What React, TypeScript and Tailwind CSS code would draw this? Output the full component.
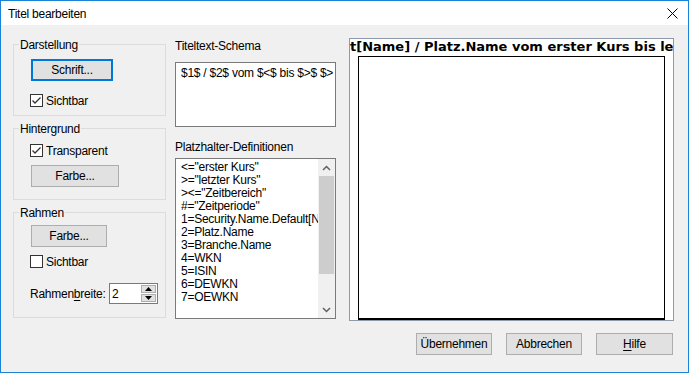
import React from "react";

const FONT = { fontFamily: '"Segoe UI", "Liberation Sans", Arial, sans-serif' };

export default function App() {
  return (
    <div
      style={FONT}
      className="flex h-[373px] w-[689px] flex-col overflow-hidden border border-[#1883d7] bg-[#f0f0f0] text-[12px] leading-[16px] tracking-[-0.25px] text-black"
    >
      {/* Title bar */}
      <div className="flex h-[24px] shrink-0 items-center justify-between bg-white pl-[7px] pr-[10px]">
        <span className="mt-[1px]">Titel bearbeiten</span>
        <svg width="11" height="11" viewBox="0 0 11 11" className="mt-[1px]">
          <path d="M0.5 0.5 L10.5 10.5 M10.5 0.5 L0.5 10.5" stroke="#000" strokeWidth="1" />
        </svg>
      </div>

      <div className="flex h-[296px] shrink-0 pl-[12px]">
        {/* Left column */}
        <div className="flex w-[153px] flex-col">
          <GroupBox label="Darstellung" className="mt-[19px] h-[72px]">
            <Button focused className="ml-[17px] mt-[6px] w-[82px]">
              Schrift...
            </Button>
            <CheckBox checked label="Sichtbar" className="mt-[13px]" />
          </GroupBox>

          <GroupBox label="Hintergrund" className="mt-[12px] h-[72px]">
            <CheckBox checked label="Transparent" className="mt-[7px]" />
            <Button className="ml-[17px] mt-[8px] w-[88px]">Farbe...</Button>
          </GroupBox>

          <GroupBox label="Rahmen" className="mt-[12px] h-[106px]">
            <Button className="ml-[17px] mt-[4px] w-[76px]">Farbe...</Button>
            <CheckBox label="Sichtbar" className="mt-[8px]" />
            <div className="ml-[16px] mt-[15px] flex items-center">
              <span className="w-[79px] whitespace-nowrap">
                Rahmen<span className="underline underline-offset-2">b</span>reite:
              </span>
              <SpinBox value="2" />
            </div>
          </GroupBox>
        </div>

        {/* Middle column */}
        <div className="ml-[9px] flex w-[161px] flex-col">
          <span className="mt-[13px]">Titeltext-Schema</span>
          <div className="mt-[8px] h-[65px] whitespace-nowrap border border-[#7a7a7a] bg-white pl-[5px] pt-[2px]">
            $1$ / $2$ vom $&lt;$ bis $&gt;$ $&gt;
          </div>

          <span className="mt-[12px]">Platzhalter-Definitionen</span>
          <div className="mt-[3px] flex h-[161px] border border-[#7a7a7a] bg-white">
            <div className="min-w-0 flex-1 overflow-hidden whitespace-nowrap pl-[5px] pt-[2px] leading-[13px]">
              {PLACEHOLDERS.map((line) => (
                <div key={line}>{line}</div>
              ))}
            </div>
            <ScrollBar />
          </div>
        </div>

        {/* Preview */}
        <div className="ml-[13px] flex w-[325px] flex-col">
          <div className="mt-[13px] flex h-[283px] flex-col overflow-hidden border border-[#8e9aab] bg-white">
            <div
              className="whitespace-nowrap text-[13px] font-bold leading-[16px] tracking-normal"
              style={{ fontFamily: '"DejaVu Sans", Verdana, sans-serif' }}
            >
              t[Name] / Platz.Name vom erster Kurs bis le
            </div>
            <div className="ml-[8px] mt-[1px] h-[264px] w-[307px] border border-b-2 border-black bg-white" />
          </div>
        </div>
      </div>

      {/* Dialog buttons */}
      <div className="mt-[12px] flex justify-end gap-[14px] pr-[15px]">
        <Button className="w-[76px]">Übernehmen</Button>
        <Button className="w-[76px]">Abbrechen</Button>
        <Button className="w-[77px]">
          <span className="underline underline-offset-2">H</span>ilfe
        </Button>
      </div>
    </div>
  );
}

const PLACEHOLDERS = [
  '<="erster Kurs"',
  '>="letzter Kurs"',
  '><="Zeitbereich"',
  '#="Zeitperiode"',
  "1=Security.Name.Default[Name]",
  "2=Platz.Name",
  "3=Branche.Name",
  "4=WKN",
  "5=ISIN",
  "6=DEWKN",
  "7=OEWKN",
];

function GroupBox({
  label,
  className,
  children,
}: {
  label: string;
  className?: string;
  children: React.ReactNode;
}) {
  return (
    <div className={`flex flex-col border border-[#dcdcdc] ${className ?? ""}`}>
      <span className="-mt-[8px] ml-[5px] w-fit bg-[#f0f0f0] px-[1px]">{label}</span>
      {children}
    </div>
  );
}

function Button({
  focused,
  className,
  children,
}: {
  focused?: boolean;
  className?: string;
  children: React.ReactNode;
}) {
  return (
    <div
      className={`flex h-[22px] items-center justify-center bg-[#e1e1e1] ${
        focused ? "border-2 border-[#0078d7]" : "border border-[#adadad]"
      } ${className ?? ""}`}
    >
      <span>{children}</span>
    </div>
  );
}

function CheckBox({
  checked,
  label,
  className,
}: {
  checked?: boolean;
  label: string;
  className?: string;
}) {
  return (
    <div className={`ml-[16px] flex h-[13px] items-center ${className ?? ""}`}>
      <div className="flex h-[13px] w-[13px] items-center justify-center border border-[#333333] bg-white">
        {checked && (
          <svg width="11" height="11" viewBox="0 0 11 11">
            <path d="M1.5 5.5 L4 8 L9.5 2.5" fill="none" stroke="#333" strokeWidth="1.3" />
          </svg>
        )}
      </div>
      <span className="ml-[3px]">{label}</span>
    </div>
  );
}

function SpinBox({ value }: { value: string }) {
  return (
    <div className="flex h-[21px] w-[49px] items-center border border-[#7a7a7a] bg-white">
      <span className="flex-1 pl-[2px]">{value}</span>
      <div className="mr-[1px] flex flex-col gap-[1px]">
        <SpinButton dir="up" />
        <SpinButton dir="down" />
      </div>
    </div>
  );
}

function SpinButton({ dir }: { dir: "up" | "down" }) {
  return (
    <div className="flex h-[8px] w-[15px] items-center justify-center border border-[#adadad] bg-[#e1e1e1]">
      <svg width="7" height="4" viewBox="0 0 7 4">
        <path d={dir === "up" ? "M0 4 L3.5 0 L7 4 Z" : "M0 0 L3.5 4 L7 0 Z"} fill="#000" />
      </svg>
    </div>
  );
}

function ScrollBar() {
  return (
    <div className="flex w-[17px] flex-col bg-[#f0f0f0]">
      <div className="flex h-[17px] items-center justify-center">
        <svg width="9" height="6" viewBox="0 0 9 6">
          <path d="M1 5 L4.5 1.5 L8 5" fill="none" stroke="#606060" strokeWidth="1.5" />
        </svg>
      </div>
      <div className="mx-[1px] h-[98px] bg-[#cdcdcd]" />
      <div className="flex-1" />
      <div className="flex h-[17px] items-center justify-center">
        <svg width="9" height="6" viewBox="0 0 9 6">
          <path d="M1 1 L4.5 4.5 L8 1" fill="none" stroke="#606060" strokeWidth="1.5" />
        </svg>
      </div>
    </div>
  );
}
